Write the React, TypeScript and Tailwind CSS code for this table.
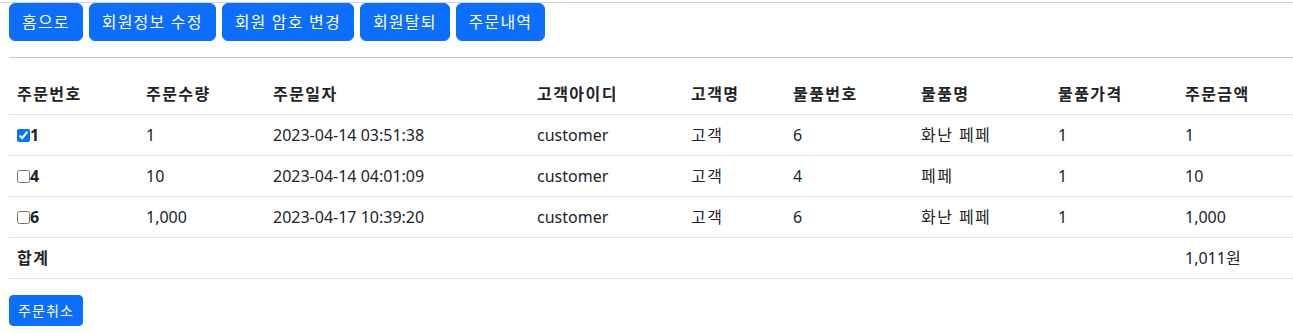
import React from "react";

const font = { fontFamily: '"Noto Sans", "Noto Sans CJK KR", sans-serif' };

function K({ children }: { children: React.ReactNode }) {
  return <span className="tracking-[0.09em]">{children}</span>;
}

const rows = [
  { no: "1", checked: true, qty: "1", date: "2023-04-14 03:51:38", cid: "customer", cname: "고객", pno: "6", pname: "화난 페페", price: "1", amount: "1" },
  { no: "4", checked: false, qty: "10", date: "2023-04-14 04:01:09", cid: "customer", cname: "고객", pno: "4", pname: "페페", price: "1", amount: "10" },
  { no: "6", checked: false, qty: "1,000", date: "2023-04-17 10:39:20", cid: "customer", cname: "고객", pno: "6", pname: "화난 페페", price: "1", amount: "1,000" },
];

const headers = ["주문번호", "주문수량", "주문일자", "고객아이디", "고객명", "물품번호", "물품명", "물품가격", "주문금액"];
const widths = ["w-[129px]", "w-[127px]", "w-[264px]", "w-[154px]", "w-[102px]", "w-[128px]", "w-[137px]", "w-[127px]", "w-[116px]"];

function Btn({ children }: { children: React.ReactNode }) {
  return (
    <button className="h-[38px] px-3 rounded-md bg-[#0d6efd] border border-[#0d6efd] text-white text-base leading-6 whitespace-pre tracking-[0.075em]">
      {children}
    </button>
  );
}

export default function App() {
  const td = "px-2 py-2 border-b border-[#dee2e6] text-base leading-6 text-[#212529] text-left align-top";
  return (
    <div style={font} className="w-[1293px] bg-white text-[#212529]">
      <div className="mt-[2px] border-t border-[#d3d4d5]" />
      <div className="pl-[9px]">
        <div className="flex gap-[6px]">
          <Btn>홈으로</Btn>
          <Btn>회원정보 수정</Btn>
          <Btn>회원 암호 변경</Btn>
          <Btn>회원탈퇴</Btn>
          <Btn>주문내역</Btn>
        </div>
        <div className="mt-[16px] border-t border-[#c8c9ca]" />
        <table className="mt-4 w-[1284px] table-fixed border-collapse">
          <thead>
            <tr>
              {headers.map((h, i) => (
                <th key={h} className={`${td} ${widths[i]} font-bold`}><K>{h}</K></th>
              ))}
            </tr>
          </thead>
          <tbody>
            {rows.map((r) => (
              <tr key={r.no}>
                <td className={`${td} font-bold`}>
                  <input type="checkbox" defaultChecked={r.checked} className="inline-block align-[-1px] w-[13px] h-[13px] m-0" />
                  {r.no}
                </td>
                <td className={td}>{r.qty}</td>
                <td className={td}>{r.date}</td>
                <td className={td}>{r.cid}</td>
                <td className={td}><K>{r.cname}</K></td>
                <td className={td}>{r.pno}</td>
                <td className={td}><K>{r.pname}</K></td>
                <td className={td}>{r.price}</td>
                <td className={td}>{r.amount}</td>
              </tr>
            ))}
            <tr>
              <td className={`${td} font-bold`}><K>합계</K></td>
              <td className={td}></td>
              <td className={td}></td>
              <td className={td}></td>
              <td className={td}></td>
              <td className={td}></td>
              <td className={td}></td>
              <td className={td}></td>
              <td className={td}>1,011<K>원</K></td>
            </tr>
          </tbody>
        </table>
        <div className="mt-4">
          <button className="h-[31px] px-2 rounded-[4px] bg-[#0d6efd] border border-[#0d6efd] text-white text-sm leading-[21px] tracking-[0.08em]">
            주문취소
          </button>
        </div>
      </div>
    </div>
  );
}
